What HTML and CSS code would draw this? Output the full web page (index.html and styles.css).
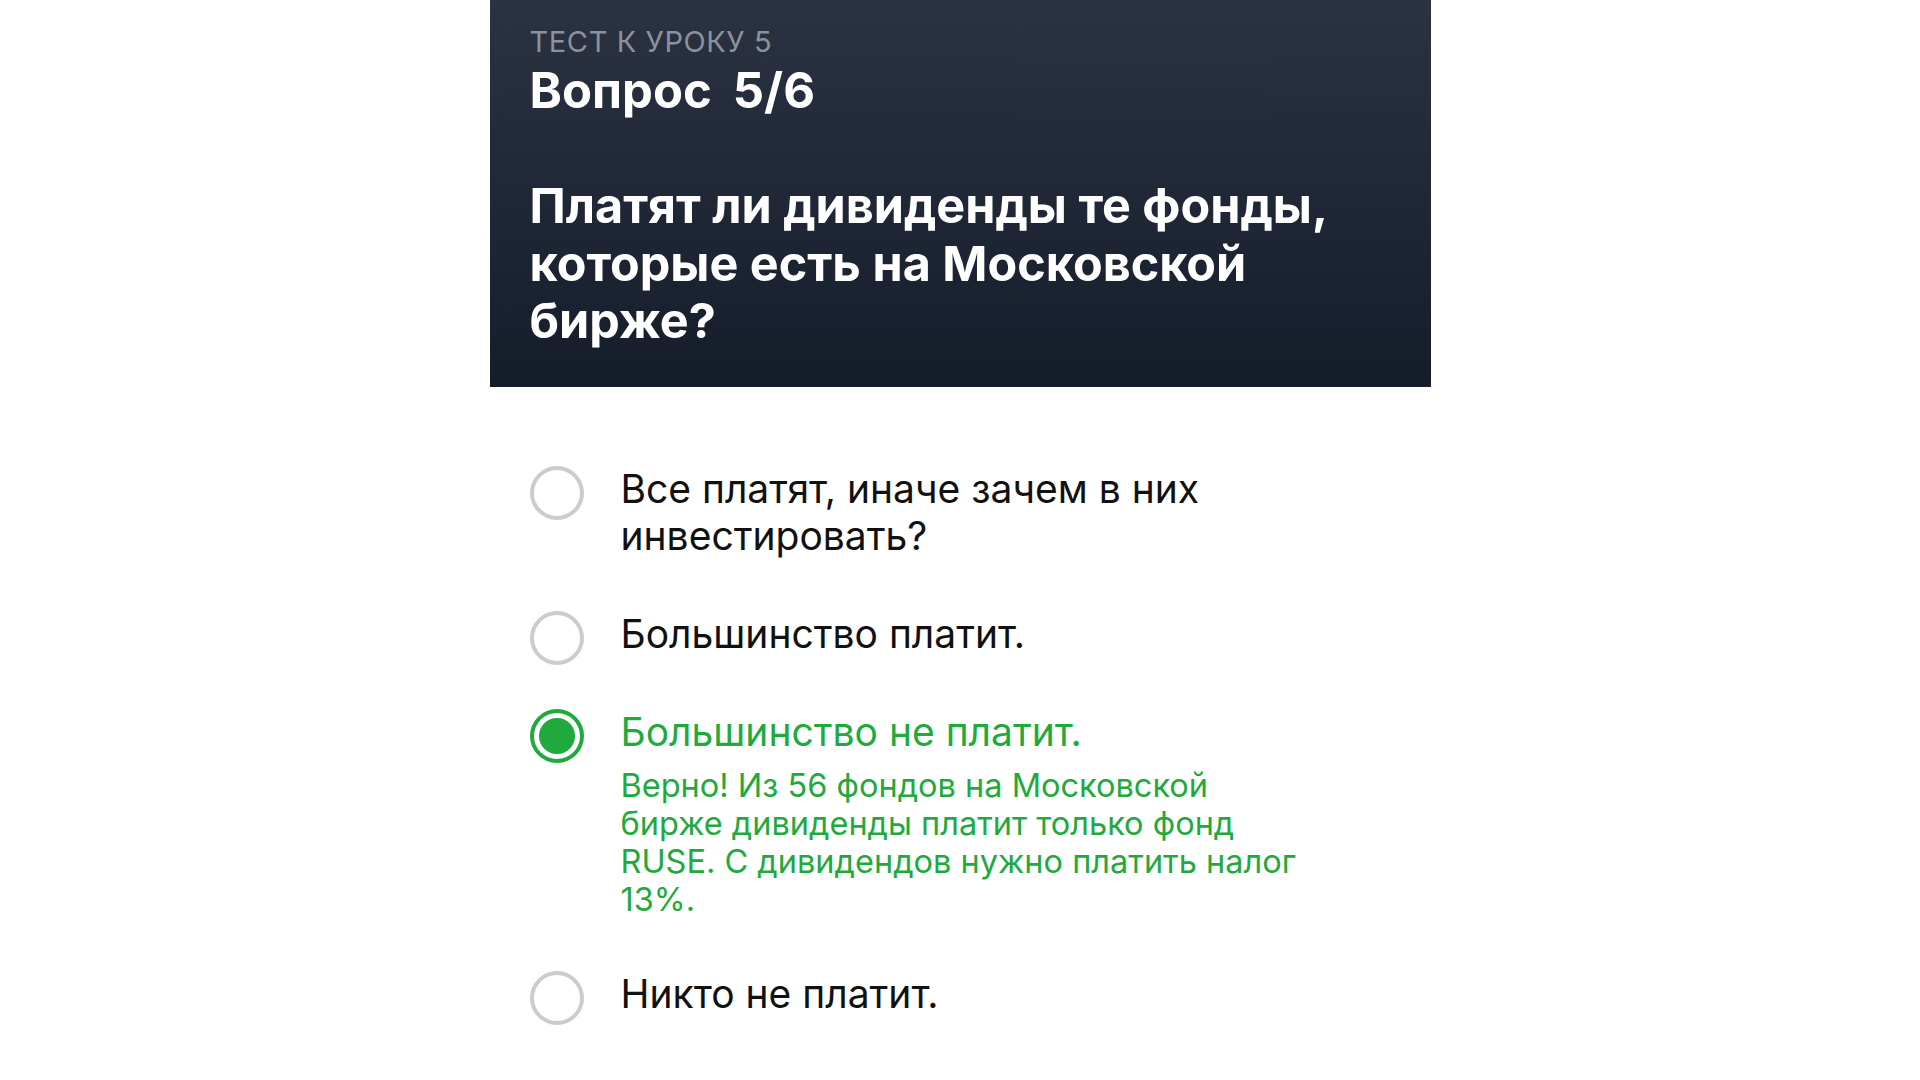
FILE: index.html
```html
<!DOCTYPE html>
<html lang="ru">
<head>
<meta charset="utf-8">
<title>Тест к уроку 5</title>
<link rel="stylesheet" href="styles.css">
</head>
<body>
<main class="screen">
  <header class="panel">
    <div class="label">ТЕСТ К УРОКУ 5</div>
    <h1 class="title"><span>Вопрос</span> <span>5/6</span></h1>
    <h2 class="question">Платят ли дивиденды те фонды, которые есть на Московской бирже?</h2>
  </header>
  <ul class="options">
    <li class="option">
      <span class="radio"></span>
      <div class="option-body">
        <div class="option-text">Все платят, иначе зачем в них инвестировать?</div>
      </div>
    </li>
    <li class="option">
      <span class="radio"></span>
      <div class="option-body">
        <div class="option-text">Большинство платит.</div>
      </div>
    </li>
    <li class="option option-correct">
      <span class="radio radio-on"><span class="radio-dot"></span></span>
      <div class="option-body">
        <div class="option-text">Большинство не платит.</div>
        <p class="explain">Верно! Из 56 фондов на Московской<br>бирже дивиденды платит только фонд<br>RUSE. С дивидендов нужно платить налог<br>13%.</p>
      </div>
    </li>
    <li class="option">
      <span class="radio"></span>
      <div class="option-body">
        <div class="option-text">Никто не платит.</div>
      </div>
    </li>
  </ul>
</main>
</body>
</html>
```
FILE: styles.css
```css
html, body {
  margin: 0;
  padding: 0;
  background: #ffffff;
}
body {
  font-family: Inter, "Noto Sans", "Liberation Sans", sans-serif;
  color: #111111;
}
.screen {
  width: 941px;
  margin: 0 auto;
  padding-bottom: 60px;
}
.panel {
  background: linear-gradient(180deg, #2b3242 0%, #1f2635 55%, #151c2a 100%);
  padding: 27px 40px 0 40px;
  height: 387px;
  box-sizing: border-box;
  color: #ffffff;
}
.label {
  font-size: 29px;
  line-height: 32px;
  color: #8c929b;
  font-weight: 400;
  letter-spacing: 0.6px;
  margin-top: -1px;
}
.title {
  margin: 7px 0 0 0;
  font-size: 49px;
  line-height: 52px;
  font-weight: 700;
  display: flex;
  gap: 21px;
}
.question {
  margin: 60px 0 0 0;
  font-size: 48.5px;
  line-height: 57.5px;
  font-weight: 700;
  width: 830px;
}
.options {
  list-style: none;
  margin: 78px 0 0 0;
  padding: 0 0 0 40px;
  display: flex;
  flex-direction: column;
  gap: 51px;
}
.option {
  display: flex;
  align-items: flex-start;
  gap: 37px;
}
.radio {
  flex: 0 0 auto;
  width: 54px;
  height: 54px;
  box-sizing: border-box;
  border: 4px solid #cccccc;
  border-radius: 50%;
  margin-top: 1px;
  margin-bottom: -10px;
  display: flex;
  align-items: center;
  justify-content: center;
}
.radio-on {
  border-color: #1faa3d;
}
.radio-dot {
  width: 36px;
  height: 36px;
  border-radius: 50%;
  background: #1faa3d;
}
.option-body {
  width: 760px;
}
.option-text {
  font-size: 39px;
  line-height: 47px;
  font-weight: 400;
  color: #111111;
}
.option-correct .option-text {
  color: #1faa3d;
}
.explain {
  margin: 12px 0 0 0;
  font-size: 32.5px;
  line-height: 38px;
  color: #1faa3d;
  white-space: nowrap;
}
```
